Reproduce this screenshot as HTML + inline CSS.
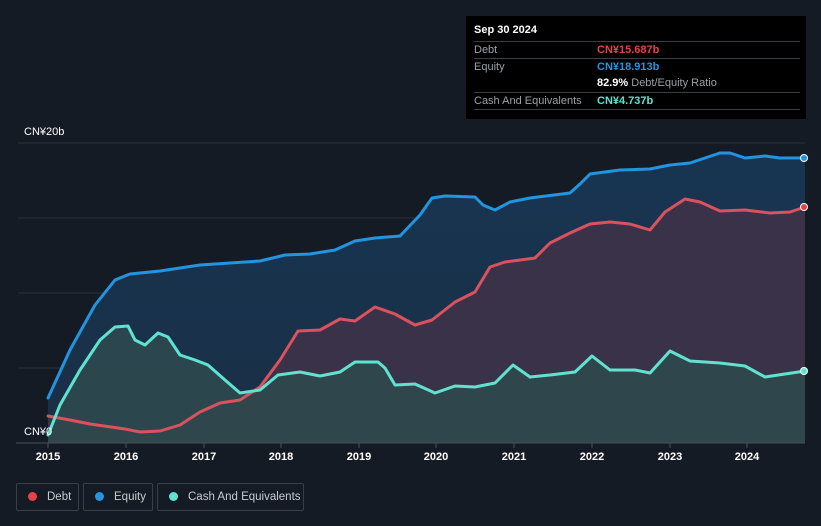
<!DOCTYPE html>
<html><head><meta charset="utf-8"><style>
html,body{margin:0;width:821px;height:526px;overflow:hidden}
body{background:#151b25;font-family:"Liberation Sans",sans-serif;position:relative}
*{box-sizing:border-box}
.tt{position:absolute;left:466px;top:16px;width:340px;height:103px;background:#000;color:#fff;font-size:11px}
.row{position:absolute;left:8px;width:326px;border-top:1px solid #3a3f46;height:17px;line-height:16px}
.lbl{color:#9aa0a6}
.v{position:absolute;left:123px;font-weight:bold}
.leg{position:absolute;top:483px;height:28px;border:1px solid #3a3f46;border-radius:2px;color:#c8ccd0;font-size:11.5px;line-height:26px;white-space:nowrap}
.dot{display:inline-block;width:9px;height:9px;border-radius:50%;margin:0 10px 0 11px;vertical-align:-1px}
.ax{position:absolute;top:451px;color:#fff;font-size:11px;font-weight:bold;transform:translateX(-50%)}
</style></head><body>
<svg width="821" height="526" style="position:absolute;left:0;top:0">
<defs>
<linearGradient id="ge" x1="0" y1="0" x2="0" y2="1"><stop offset="0" stop-color="#173552"/><stop offset="1" stop-color="#1a2f45"/></linearGradient>
</defs>
<g stroke="#2a313b" stroke-width="1"><line x1="18" y1="143" x2="805" y2="143"/><line x1="18" y1="218" x2="805" y2="218"/><line x1="18" y1="293" x2="805" y2="293"/><line x1="18" y1="368" x2="805" y2="368"/></g>
<path fill="url(#ge)" d="M48,398 L70,350 L95,305 L115,280 L130,274 L160,271 L200,265 L230,263 L260,261 L285,255 L310,254 L335,250 L355,241 L375,238 L400,236 L420,215 L432,198 L445,196 L475,197 L483,205 L495,210 L510,202 L530,198 L570,193 L580,184 L590,174 L620,170 L650,169 L670,165 L690,163 L720,153 L730,153 L745,158 L765,156 L780,158 L805,158 L805,443 L48,443Z"/>
<path fill="#3a3248" d="M48,416 L70,420 L90,424 L125,429 L140,432 L160,431 L180,425 L200,412 L220,403 L240,400 L260,387 L280,360 L298,331 L320,330 L340,319 L355,321 L375,307 L395,314 L415,325 L432,320 L455,302 L475,292 L490,267 L505,262 L535,258 L550,243 L570,233 L590,224 L610,222 L630,224 L650,230 L665,212 L685,199 L700,202 L720,211 L745,210 L770,213 L790,212 L805,207 L805,443 L48,443Z"/>
<path fill="#2f4a4f" fill-opacity="0.85" d="M48,435 L60,405 L80,370 L100,340 L115,327 L128,326 L135,340 L145,345 L158,333 L168,337 L180,355 L195,360 L208,365 L225,380 L240,393 L260,390 L278,375 L300,372 L320,376 L340,372 L355,362 L378,362 L385,368 L395,385 L415,384 L435,393 L455,386 L475,387 L495,383 L513,365 L530,377 L550,375 L575,372 L592,356 L610,370 L635,370 L650,373 L670,351 L690,361 L720,363 L745,366 L765,377 L805,371 L805,443 L48,443Z"/>
<g fill="none" stroke-width="3" stroke-linejoin="round" stroke-linecap="round">
<path stroke="#2394e0" d="M48,398 L70,350 L95,305 L115,280 L130,274 L160,271 L200,265 L230,263 L260,261 L285,255 L310,254 L335,250 L355,241 L375,238 L400,236 L420,215 L432,198 L445,196 L475,197 L483,205 L495,210 L510,202 L530,198 L570,193 L580,184 L590,174 L620,170 L650,169 L670,165 L690,163 L720,153 L730,153 L745,158 L765,156 L780,158 L805,158"/>
<path stroke="#d9525d" d="M48,416 L70,420 L90,424 L125,429 L140,432 L160,431 L180,425 L200,412 L220,403 L240,400 L260,387 L280,360 L298,331 L320,330 L340,319 L355,321 L375,307 L395,314 L415,325 L432,320 L455,302 L475,292 L490,267 L505,262 L535,258 L550,243 L570,233 L590,224 L610,222 L630,224 L650,230 L665,212 L685,199 L700,202 L720,211 L745,210 L770,213 L790,212 L805,207"/>
<path stroke="#5fe3d0" d="M48,435 L60,405 L80,370 L100,340 L115,327 L128,326 L135,340 L145,345 L158,333 L168,337 L180,355 L195,360 L208,365 L225,380 L240,393 L260,390 L278,375 L300,372 L320,376 L340,372 L355,362 L378,362 L385,368 L395,385 L415,384 L435,393 L455,386 L475,387 L495,383 L513,365 L530,377 L550,375 L575,372 L592,356 L610,370 L635,370 L650,373 L670,351 L690,361 L720,363 L745,366 L765,377 L805,371"/>
</g>
<circle cx="804" cy="158" r="3.5" fill="#2394e0" stroke="#fff" stroke-width="1"/>
<circle cx="804" cy="207" r="3.5" fill="#e0414b" stroke="#fff" stroke-width="1"/>
<circle cx="804" cy="371" r="3.5" fill="#5fe3d0" stroke="#fff" stroke-width="1"/>
<line x1="16" y1="443" x2="805" y2="443" stroke="#4a5058"/>
<g stroke="#4a5058"><line x1="48" y1="443" x2="48" y2="448"/><line x1="126" y1="443" x2="126" y2="448"/><line x1="204" y1="443" x2="204" y2="448"/><line x1="281" y1="443" x2="281" y2="448"/><line x1="359" y1="443" x2="359" y2="448"/><line x1="436" y1="443" x2="436" y2="448"/><line x1="514" y1="443" x2="514" y2="448"/><line x1="592" y1="443" x2="592" y2="448"/><line x1="670" y1="443" x2="670" y2="448"/><line x1="747" y1="443" x2="747" y2="448"/></g>
<text x="24" y="135" fill="#fff" font-size="11" font-family="Liberation Sans">CN¥20b</text>
<text x="24" y="435" fill="#fff" font-size="11" font-family="Liberation Sans">CN¥0</text>
</svg>
<div class="ax" style="left:48px">2015</div><div class="ax" style="left:126px">2016</div><div class="ax" style="left:204px">2017</div><div class="ax" style="left:281px">2018</div><div class="ax" style="left:359px">2019</div><div class="ax" style="left:436px">2020</div><div class="ax" style="left:514px">2021</div><div class="ax" style="left:592px">2022</div><div class="ax" style="left:670px">2023</div><div class="ax" style="left:747px">2024</div>
<div class="tt">
<div style="position:absolute;left:8px;top:8px;font-weight:bold;font-size:11px">Sep 30 2024</div>
<div class="row" style="top:25px"><span class="lbl">Debt</span><span class="v" style="color:#e8414b">CN¥15.687b</span></div>
<div class="row" style="top:42px"><span class="lbl">Equity</span><span class="v" style="color:#2394e0">CN¥18.913b</span></div>
<div class="row" style="top:59px;border-top:none"><span class="v" style="color:#fff">82.9% <span style="font-weight:normal;color:#9aa0a6">Debt/Equity Ratio</span></span></div>
<div class="row" style="top:76px"><span class="lbl">Cash And Equivalents</span><span class="v" style="color:#5fe3d0">CN¥4.737b</span></div>
<div class="row" style="top:93px;height:0"></div>
</div>
<div class="leg" style="left:16px;width:63px"><span class="dot" style="background:#e8414b"></span>Debt</div>
<div class="leg" style="left:83px;width:70px"><span class="dot" style="background:#2394e0"></span>Equity</div>
<div class="leg" style="left:157px;width:147px"><span class="dot" style="background:#5fe3d0"></span>Cash And Equivalents</div>
</body></html>
